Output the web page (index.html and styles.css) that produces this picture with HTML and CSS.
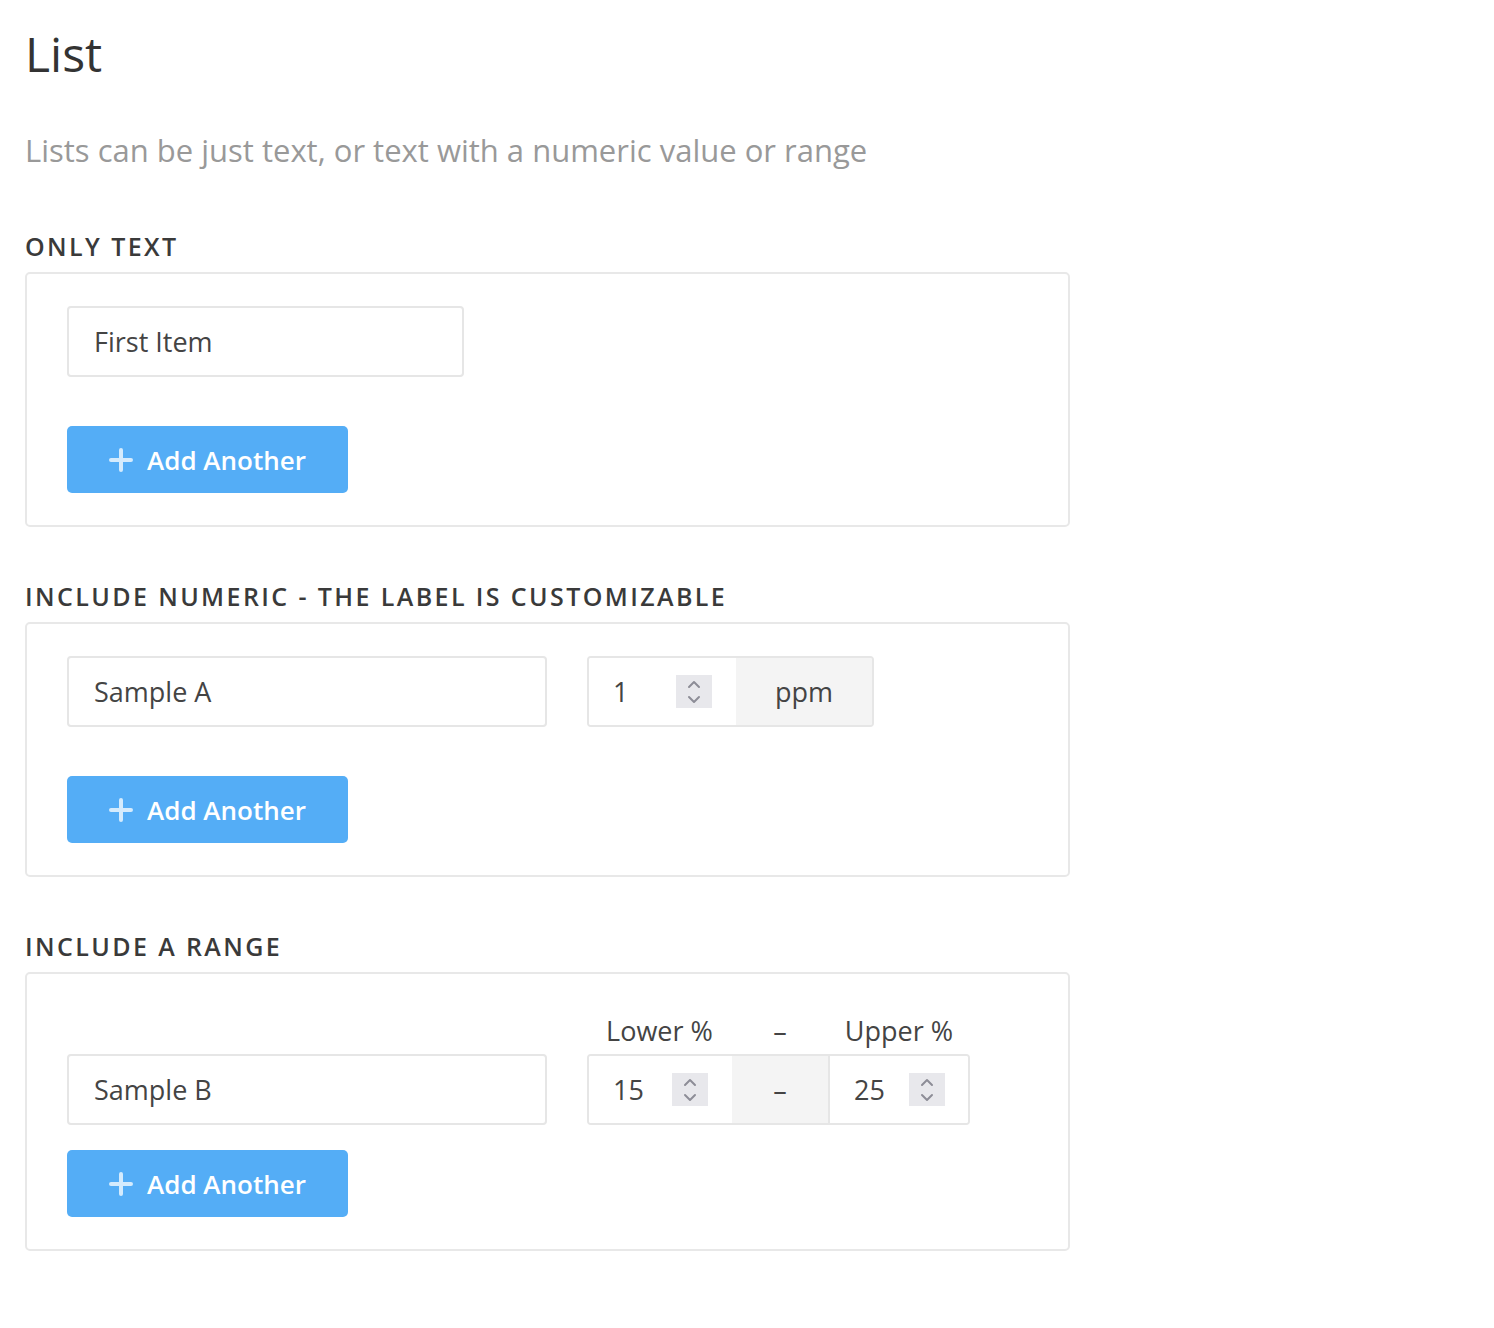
FILE: index.html
```html
<!DOCTYPE html>
<html lang="en">
<head>
<meta charset="utf-8">
<title>List</title>
<link rel="stylesheet" href="styles.css">
</head>
<body>
<main class="page">
  <h1 class="title">List</h1>
  <p class="lead">Lists can be just text, or text with a numeric value or range</p>

  <section class="group">
    <h2 class="group-title">Only Text</h2>
    <div class="card">
      <div class="row">
        <div class="field field-sm">First Item</div>
      </div>
      <button class="btn" type="button">
        <svg class="btn-icon" viewBox="0 0 24 24" width="24" height="24" aria-hidden="true"><path d="M12 2v20M2 12h20" stroke="currentColor" stroke-width="4" stroke-linecap="round" fill="none"/></svg>
        <span>Add Another</span>
      </button>
    </div>
  </section>

  <section class="group">
    <h2 class="group-title">Include Numeric - The label is customizable</h2>
    <div class="card">
      <div class="row">
        <div class="field field-md">Sample A</div>
        <div class="combo">
          <div class="num num-a">
            <span class="num-val">1</span>
            <span class="spin"><svg viewBox="0 0 20 30" width="20" height="30" aria-hidden="true"><path d="M5 10l5-5 5 5M5 20l5 5 5-5" stroke="currentColor" stroke-width="2" fill="none" stroke-linecap="round" stroke-linejoin="round"/></svg></span>
          </div>
          <div class="addon addon-unit">ppm</div>
        </div>
      </div>
      <button class="btn" type="button">
        <svg class="btn-icon" viewBox="0 0 24 24" width="24" height="24" aria-hidden="true"><path d="M12 2v20M2 12h20" stroke="currentColor" stroke-width="4" stroke-linecap="round" fill="none"/></svg>
        <span>Add Another</span>
      </button>
    </div>
  </section>

  <section class="group">
    <h2 class="group-title">Include a Range</h2>
    <div class="card card-range">
      <div class="range-item">
        <div class="range-labels">
          <span class="range-label">Lower %</span>
          <span class="range-label">–</span>
          <span class="range-label">Upper %</span>
        </div>
        <div class="row">
          <div class="field field-md">Sample B</div>
          <div class="combo">
            <div class="num num-lo">
              <span class="num-val">15</span>
              <span class="spin"><svg viewBox="0 0 20 30" width="20" height="30" aria-hidden="true"><path d="M5 10l5-5 5 5M5 20l5 5 5-5" stroke="currentColor" stroke-width="2" fill="none" stroke-linecap="round" stroke-linejoin="round"/></svg></span>
            </div>
            <div class="addon addon-dash">–</div>
            <div class="num num-hi">
              <span class="num-val">25</span>
              <span class="spin"><svg viewBox="0 0 20 30" width="20" height="30" aria-hidden="true"><path d="M5 10l5-5 5 5M5 20l5 5 5-5" stroke="currentColor" stroke-width="2" fill="none" stroke-linecap="round" stroke-linejoin="round"/></svg></span>
            </div>
          </div>
        </div>
      </div>
      <button class="btn" type="button">
        <svg class="btn-icon" viewBox="0 0 24 24" width="24" height="24" aria-hidden="true"><path d="M12 2v20M2 12h20" stroke="currentColor" stroke-width="4" stroke-linecap="round" fill="none"/></svg>
        <span>Add Another</span>
      </button>
    </div>
  </section>
</main>
</body>
</html>
```

FILE: styles.css
```css
* { box-sizing: border-box; }

body {
  margin: 0;
  background: #fff;
  color: #444;
  font-family: "Open Sans", "Noto Sans", "Liberation Sans", sans-serif;
}

.page {
  width: 1095px;
  padding: 22px 25px 40px;
}

.title {
  margin: 0;
  font-size: 48px;
  font-weight: 400;
  line-height: 64px;
  color: #333;
}

.lead {
  margin: 44px 0 0;
  font-size: 31px;
  line-height: 40px;
  color: #999;
}

.group {
  margin-top: 56px;
}

.group + .group {
  margin-top: 49px;
}

.group-title {
  margin: 0 0 6px;
  font-size: 25px;
  line-height: 40px;
  font-weight: 600;
  letter-spacing: 2.4px;
  text-transform: uppercase;
  color: #3a3a3a;
}

.card {
  display: flex;
  flex-direction: column;
  align-items: flex-start;
  gap: 49px;
  width: 1045px;
  padding: 32px 40px;
  border: 2px solid #e8e8e8;
  border-radius: 5px;
}

.card-range {
  gap: 25px;
}

.row {
  display: flex;
  gap: 40px;
}

.field {
  display: flex;
  align-items: center;
  height: 71px;
  padding: 0 25px;
  border: 2px solid #e6e6e6;
  border-radius: 4px;
  font-size: 27px;
  color: #444;
}

.field-sm { width: 397px; }
.field-md { width: 480px; }

.combo {
  display: flex;
  height: 71px;
  border: 2px solid #e6e6e6;
  border-radius: 4px;
  overflow: hidden;
}

.num {
  display: flex;
  align-items: center;
  justify-content: space-between;
  padding: 0 24px 0 24px;
  font-size: 27px;
  color: #444;
  background: #fff;
}

.num-a { width: 147px; }
.num-lo { width: 143px; }
.num-hi { width: 140px; border-left: 2px solid #e6e6e6; padding-right: 23px; }

.spin {
  display: flex;
  align-items: center;
  justify-content: center;
  width: 36px;
  height: 33px;
  background: #e8e8ec;
  color: #8d8d97;
}

.addon {
  display: flex;
  align-items: center;
  justify-content: center;
  background: #f4f4f4;
  font-size: 27px;
  color: #444;
}

.addon-unit { width: 136px; }
.addon-dash { width: 96px; }

.range-item {
  display: flex;
  flex-direction: column;
}

.range-labels {
  display: grid;
  grid-template-columns: 145px 96px 142px;
  height: 48px;
  margin-left: 520px;
  align-items: center;
}

.range-label {
  text-align: center;
  font-size: 27px;
  color: #444;
}

.btn {
  display: flex;
  align-items: center;
  gap: 14px;
  width: 281px;
  height: 67px;
  padding: 0 0 0 42px;
  border: 0;
  border-radius: 5px;
  background: #54adf6;
  color: #fff;
  font-family: inherit;
  font-size: 26px;
  font-weight: 600;
  cursor: pointer;
}

.btn-icon {
  color: #d4ebfd;
  flex: none;
}
```
